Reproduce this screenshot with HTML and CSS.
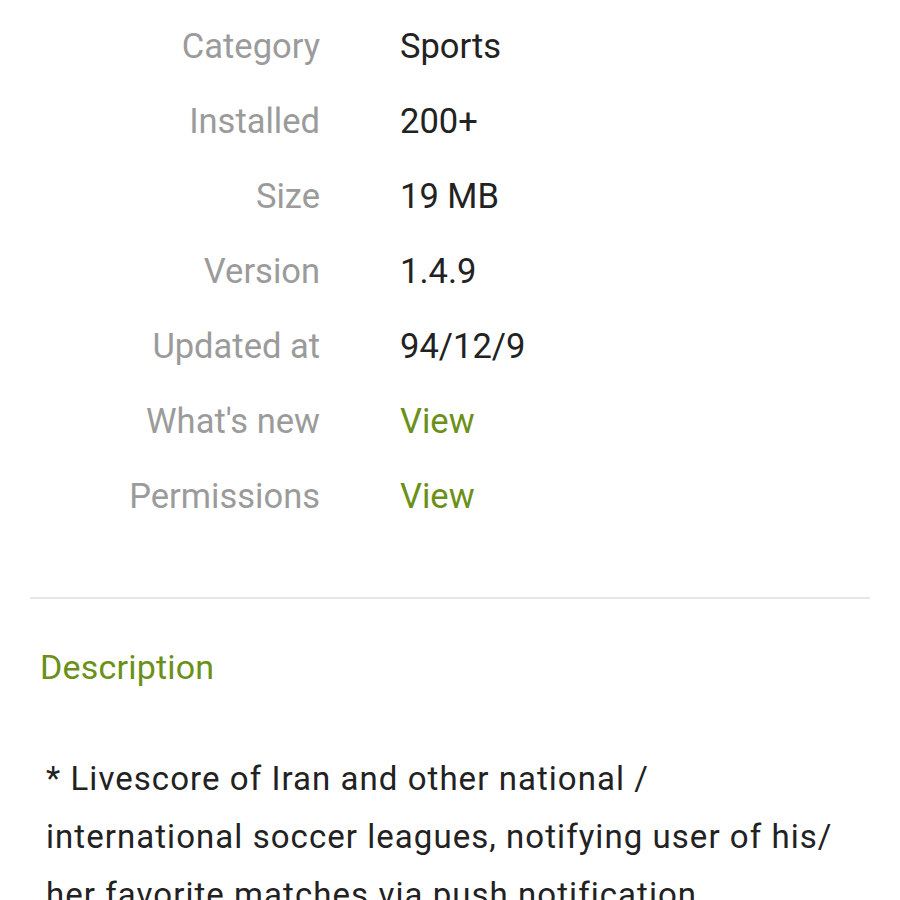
FILE: index.html
```html
<!DOCTYPE html>
<html lang="en">
<head>
    <meta charset="UTF-8">
    <meta name="viewport" content="width=device-width, initial-scale=1.0">
    <title>App details</title>
    <link rel="stylesheet" href="styles.css">
</head>
<body>
    <div class="info">
        <div class="row"><span class="label">Category</span><span class="value">Sports</span></div>
        <div class="row"><span class="label">Installed</span><span class="value">200+</span></div>
        <div class="row"><span class="label">Size</span><span class="value">19 MB</span></div>
        <div class="row"><span class="label">Version</span><span class="value">1.4.9</span></div>
        <div class="row"><span class="label">Updated at</span><span class="value">94/12/9</span></div>
        <div class="row"><span class="label">What's new</span><a class="value link" href="#">View</a></div>
        <div class="row"><span class="label">Permissions</span><a class="value link" href="#">View</a></div>
    </div>

    <hr class="divider">

    <div class="description">
        <h2>Description</h2>
        <p>* Livescore of Iran and other national / international soccer leagues, notifying user of his/ her favorite matches via push notification</p>
    </div>
</body>
</html>
```

FILE: styles.css
```css
body {
    font-family: Roboto, "Noto Sans", sans-serif;
    margin: 0;
    background-color: #fff;
    color: #222;
}
.info {
    padding-top: 8px;
}
.row {
    display: grid;
    grid-template-columns: 320px 1fr;
    column-gap: 80px;
    height: 75px;
    align-items: center;
    font-size: 34.5px;
}
.label {
    text-align: right;
    color: #9b9b9b;
}
.value {
    color: #222;
}
.link {
    color: #6b9018;
    text-decoration: none;
}
.divider {
    margin: 64px 30px 0;
    border: 0;
    border-top: 2px solid #e6e6e6;
}
.description {
    padding: 0 40px;
}
.description h2 {
    margin: 48px 0 0;
    font-size: 34px;
    font-weight: normal;
    color: #6b9018;
    letter-spacing: 0.2px;
}
.description p {
    margin: 63px 6px 0;
    font-size: 33px;
    line-height: 58px;
    color: #222;
    letter-spacing: 1.05px;
}
```
